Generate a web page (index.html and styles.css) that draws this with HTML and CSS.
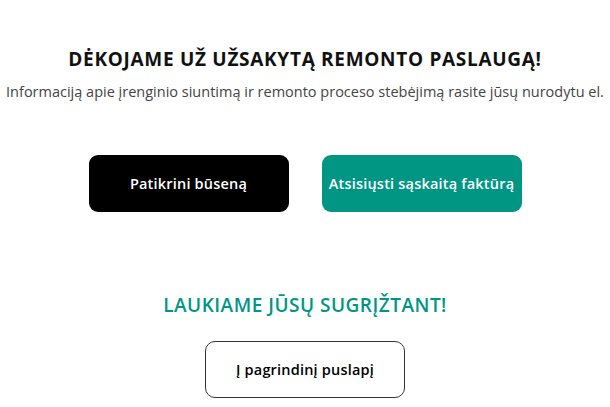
FILE: index.html
```html
<!DOCTYPE html>
<html lang="lt">
<head>
<meta charset="utf-8">
<link rel="stylesheet" href="styles.css">
</head>
<body>
<main class="page">
  <h1 class="title">DĖKOJAME UŽ UŽSAKYTĄ REMONTO PASLAUGĄ!</h1>
  <p class="lead">Informaciją apie įrenginio siuntimą ir remonto proceso stebėjimą rasite jūsų nurodytu el.</p>
  <div class="actions">
    <a class="btn btn-dark" href="#">Patikrini būseną</a>
    <a class="btn btn-teal" href="#">Atsisiųsti sąskaitą faktūrą</a>
  </div>
  <h2 class="subtitle">LAUKIAME JŪSŲ SUGRĮŽTANT!</h2>
  <a class="btn btn-outline" href="#">Į pagrindinį puslapį</a>
</main>
</body>
</html>
```
FILE: styles.css
```css
* { box-sizing: border-box; }
html, body { margin: 0; padding: 0; background: #fff; }
body { font-family: "Open Sans", "Noto Sans", sans-serif; color: #000; }
.page {
  display: flex;
  flex-direction: column;
  align-items: center;
  padding-top: 46px;
}
.title {
  margin: 0;
  font-size: 19px;
  font-weight: 700;
  line-height: 26px;
  letter-spacing: 0.7px;
  color: #111;
}
.lead {
  margin: 10px 0 0;
  font-size: 14.5px;
  line-height: 20px;
  color: #444;
  white-space: nowrap;
}
.actions {
  display: flex;
  gap: 33px;
  margin-top: 53px;
}
.btn {
  display: flex;
  align-items: center;
  justify-content: center;
  width: 200px;
  height: 57px;
  border-radius: 9px;
  font-size: 14.5px;
  font-weight: 600;
  letter-spacing: 0.2px;
  text-decoration: none;
}
.btn-dark { background: #000; color: #fff; }
.btn-teal { background: #009683; color: #fff; }
.subtitle {
  margin: 80px 0 0;
  font-size: 19px;
  font-weight: 600;
  line-height: 26px;
  letter-spacing: 0.5px;
  color: #009683;
}
.btn-outline {
  margin-top: 23px;
  border: 1px solid #333;
  border-radius: 10px;
  color: #000;
  background: #fff;
}
```
